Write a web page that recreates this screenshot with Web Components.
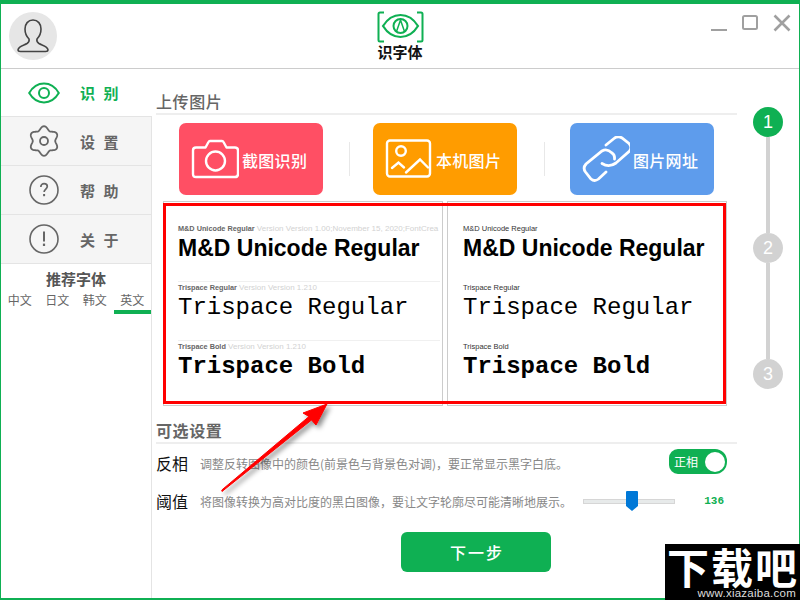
<!DOCTYPE html>
<html lang="zh">
<head>
<meta charset="utf-8">
<title>识字体</title>
<style>
  html, body { margin: 0; padding: 0; background: #fff; }
  body { font-family: "Noto Sans CJK SC", "Liberation Sans", sans-serif; }
</style>
</head>
<body>
<font-app>
  <app-header slot="header"></app-header>

  <side-nav slot="side">
    <nav-item icon="eye" active>识别</nav-item>
    <nav-item icon="gear">设置</nav-item>
    <nav-item icon="help">帮助</nav-item>
    <nav-item icon="info">关于</nav-item>
    <font-tabs></font-tabs>
  </side-nav>

  <main-panel slot="main">
    <section-title tall>上传图片</section-title>
    <upload-row>
      <upload-button icon="camera" color="#ff4f64">截图识别</upload-button>
      <upload-button icon="picture" color="#ff9c00">本机图片</upload-button>
      <upload-button icon="link" color="#5e9cec">图片网址</upload-button>
    </upload-row>
    <font-preview></font-preview>
    <section-title>可选设置</section-title>
    <option-row label="反相" text="调整反转图像中的颜色(前景色与背景色对调)，要正常显示黑字白底。">
      <toggle-switch>正相</toggle-switch>
    </option-row>
    <option-row label="阈值" text="将图像转换为高对比度的黑白图像，要让文字轮廓尽可能清晰地展示。">
      <range-slider value="136"></range-slider>
    </option-row>
    <next-button>下一步</next-button>
  </main-panel>

  <step-rail slot="rail"></step-rail>

  <red-arrow slot="over"></red-arrow>
  <site-mark slot="over"></site-mark>
</font-app>

<script>
const GREEN = '#0fb053';

// scalloped outline for the settings cog
function cogPath(cx, cy, r, bump, lobes) {
  const pts = [];
  for (let i = 0; i < 120; i++) {
    const a = (i / 120) * Math.PI * 2;
    const rr = r + bump * Math.cos(lobes * a);
    pts.push(`${(cx + rr * Math.sin(a)).toFixed(2)} ${(cy - rr * Math.cos(a)).toFixed(2)}`);
  }
  return `M${pts.join('L')}Z`;
}

const ICONS = {
  eye: `<svg width="32" height="22" viewBox="0 0 32 22" fill="none" stroke="${GREEN}" stroke-width="2"><path d="M1.2 11C5 4.6 10 1.6 16 1.6S27 4.6 30.8 11C27 17.4 22 20.4 16 20.4S5 17.4 1.2 11Z"/><circle cx="16" cy="11" r="5"/></svg>`,
  gear: `<svg width="32" height="32" viewBox="0 0 32 32" fill="none" stroke="#666" stroke-width="1.800"><path d="${cogPath(16, 16, 13, 1.8, 6)}"/><circle cx="16" cy="16" r="4"/></svg>`,
  help: `<svg width="32" height="32" viewBox="0 0 32 32" fill="none" stroke="#666"><circle cx="16" cy="16" r="14" stroke-width="1.6"/><path d="M12.8 13c0-2.100 1.400-3.300 3.300-3.300s3.200 1.200 3.200 2.900c0 2.400-3.200 2.700-3.200 5.500" stroke-width="1.700"/><path d="M16.100 20v2.200" stroke-width="2"/></svg>`,
  info: `<svg width="32" height="32" viewBox="0 0 32 32" fill="none" stroke="#666"><circle cx="16" cy="16" r="14" stroke-width="1.6"/><path d="M16 8.600v10" stroke-width="2"/><path d="M16 20.600v2.400" stroke-width="2.200"/></svg>`,
  camera: `<svg width="48" height="40" viewBox="0 0 48 40" fill="none" stroke="#fff" stroke-width="2.400" stroke-linejoin="round"><path d="M5 8.500h9.500l3-5.500q.5-1 1.500-1h12q1 0 1.500 1l3 5.500H44q3 0 3 3V35q0 3-3 3H5q-3 0-3-3V11.500q0-3 3-3Z"/><circle cx="24.500" cy="22" r="9.500"/></svg>`,
  picture: `<svg width="48" height="40" viewBox="0 0 48 40" fill="none" stroke="#fff" stroke-width="2.400" stroke-linecap="round"><rect x="2" y="1.500" width="43" height="36" rx="3"/><circle cx="16" cy="12" r="4.800"/><path d="M7 29l6.500-5.500 5.500 5M21 33.500L35 20.500l8 8"/></svg>`,
  link: `<svg width="48" height="46" viewBox="4 4 48 46" fill="none" stroke="#fff" stroke-width="2.800" stroke-linecap="round"><path d="M28 13L36 6.500Q40 3.500 44 6L51 11.500Q54.500 15 51.500 19L38 31Q31 36 24 31.500"/><path d="M36.500 27Q37 23 34 21Q29 16 24 19L8 32Q4.500 36 7.500 40L13 47Q16.500 50 20.500 47L28 40"/></svg>`,
};

// shared bit: attach an open root and fill it from render()
class ShadowEl extends HTMLElement {
  constructor() {
    super();
    this.attachShadow({ mode: 'open' });
  }
  connectedCallback() {
    this.shadowRoot.innerHTML = this.render();
  }
}

class FontApp extends ShadowEl {
  render() {
    return `<style>
      :host { display: block; position: relative; width: 800px; height: 600px; overflow: hidden; background: #fff; }
      .win { box-sizing: border-box; width: 800px; height: 600px; display: grid; grid-template-rows: 65px 1fr; grid-template-columns: 151px 593px 1fr;
        border-style: solid; border-color: ${GREEN}; border-width: 4px 1px 2px 1px; }
      .head { grid-column: 1 / 4; }
    </style>
    <div class="win">
      <div class="head"><slot name="header"></slot></div>
      <slot name="side"></slot>
      <slot name="main"></slot>
      <slot name="rail"></slot>
    </div>
    <slot name="over"></slot>`;
  }
}

class AppHeader extends ShadowEl {
  render() {
    return `<style>
      :host { display: flex; box-sizing: border-box; height: 65px; border-bottom: 1px solid #ccc; justify-content: space-between; align-items: flex-start; position: relative; }
      .avatar { width: 48px; height: 48px; border-radius: 50%; background: #e6e6e6; margin: 8px 0 0 8px; display: flex; align-items: center; justify-content: center; }
      .logo { position: absolute; left: 0; right: 0; top: 7px; display: flex; flex-direction: column; align-items: center; }
      .logo span { font-size: 15px; line-height: 16px; font-weight: 700; color: #111; margin-top: 1px; }
      .btns { display: flex; align-items: center; gap: 15px; margin: 10px 8px 0 0; }
    </style>
    <div class="avatar">
      <svg width="34" height="36" viewBox="0 0 34 36" fill="none" stroke="#444" stroke-width="1.600">
        <path d="M17 2c-5 0-8 4-8 9 0 4 1.500 7.500 4 10 .6 2-.5 3.500-2 4.500-3 1.800-8.500 2.500-9 6.300 0 1.200 1 1.700 2.500 1.700h25c1.500 0 2.500-.5 2.500-1.700-.5-3.800-6-4.500-9-6.300-1.500-1-2.600-2.500-2-4.500 2.500-2.500 4-6 4-10 0-5-3-9-8-9Z"/>
      </svg>
    </div>
    <div class="logo">
      <svg width="47" height="32" viewBox="0 0 47 32" fill="none" stroke="${GREEN}" stroke-width="2">
        <path d="M7 1.500H3Q1.500 1.500 1.500 3v26q0 1.500 1.500 1.500h4M40 1.500h4q1.500 0 1.500 1.500v26q0 1.500-1.500 1.500h-4"/>
        <path d="M6 15C11 7 17 4 23.500 4S36 7 41 15C36 23 30 26 23.500 26S11 23 6 15Z" stroke-width="2.200"/>
        <circle cx="23.500" cy="15" r="7"/>
        <path d="M19.500 20.500L23.500 9l4 11.500" stroke-width="1.500"/>
      </svg>
      <span>识字体</span>
    </div>
    <div class="btns">
      <svg width="16" height="4" viewBox="0 0 16 4" style="margin-top:14px"><rect y="1" width="16" height="2" fill="#a0a0a0"/></svg>
      <svg width="16" height="16" viewBox="0 0 16 16" fill="none" stroke="#a0a0a0" stroke-width="2"><rect x="1" y="1" width="14" height="13" rx="1.500"/></svg>
      <svg width="18" height="18" viewBox="0 0 18 18" fill="none" stroke="#a0a0a0" stroke-width="2.600"><path d="M1.500 1.500l15 15M16.500 1.500l-15 15"/></svg>
    </div>`;
  }
}

class SideNav extends ShadowEl {
  render() {
    return `<style>
      :host { display: block; box-sizing: border-box; width: 151px; border-right: 1px solid #e4e4e4; background: #fff; }
    </style><slot></slot>`;
  }
}

class NavItem extends ShadowEl {
  render() {
    const active = this.hasAttribute('active');
    const label = this.textContent.trim().split('').join(' ');
    return `<style>
      :host { display: flex; box-sizing: border-box; align-items: center; height: 49px; background: ${active ? '#fff' : '#f5f5f5'};
        border-bottom: 1px solid #e4e4e4; ${active ? 'margin-right: -1px; height: 48px;' : ''} }
      .ico { width: 32px; height: 32px; margin-left: 27px; display: flex; align-items: center; justify-content: center; }
      .txt { margin-left: 20px; font-size: 15px; font-weight: 700; letter-spacing: 2.500px; white-space: pre; color: ${active ? GREEN : '#666'}; }
    </style>
    <div class="ico">${ICONS[this.getAttribute('icon')]}</div>
    <div class="txt">${label}</div>`;
  }
}

class FontTabs extends ShadowEl {
  render() {
    const tabs = ['中文', '日文', '韩文', '英文'];
    return `<style>
      :host { display: block; text-align: center; }
      h4 { margin: 0; padding-top: 5px; font-size: 15px; line-height: 20px; font-weight: 700; color: #555; }
      .tabs { display: grid; grid-template-columns: repeat(4, 1fr); }
      .tab { font-size: 12px; line-height: 20px; height: 25px; box-sizing: border-box; color: #666; padding-top: 1px; }
      .on { border-bottom: 4px solid ${GREEN}; }
    </style>
    <h4>推荐字体</h4>
    <div class="tabs">${tabs.map((t, i) => `<div class="tab${i === 3 ? ' on' : ''}">${t}</div>`).join('')}</div>`;
  }
}

class MainPanel extends ShadowEl {
  render() {
    return `<style>
      :host { display: block; box-sizing: border-box; padding-left: 4px; width: 593px; height: 529px; }
    </style><slot></slot>`;
  }
}

class SectionTitle extends ShadowEl {
  render() {
    const tall = this.hasAttribute('tall');
    return `<style>
      :host { display: flex; box-sizing: border-box; width: 581px; height: ${tall ? 46 : 38}px; align-items: flex-end; border-bottom: 2px solid #eee; }
      span { font-size: 16px; line-height: 22px; margin-bottom: 1px; font-weight: ${tall ? 500 : 700}; color: #666; letter-spacing: .6px; }
    </style><span><slot></slot></span>`;
  }
}

class UploadRow extends ShadowEl {
  render() {
    return `<style>
      :host { display: flex; align-items: center; margin: 8px 0 0 23px; }
      i { width: 1px; height: 34px; background: #e8e8e8; }
      i.a { margin: 0 23px 0 26px; order: 2; }
      i.b { margin: 0 25px 0 27px; order: 4; }
      ::slotted(upload-button:nth-of-type(2)) { order: 3; }
      ::slotted(upload-button:nth-of-type(3)) { order: 5; }
    </style><slot></slot><i class="a"></i><i class="b"></i>`;
  }
}

class UploadButton extends ShadowEl {
  render() {
    return `<style>
      :host { display: flex; width: 144px; height: 72px; box-sizing: border-box; padding-left: 12px; align-items: center; gap: 3px; border-radius: 7px; background: ${this.getAttribute('color')}; color: #fff; }
      span { font-size: 16px; font-weight: 500; letter-spacing: .3px; white-space: nowrap; margin-top: 1px; }
      svg { display: block; flex: none; }
    </style>${ICONS[this.getAttribute('icon')]}<span><slot></slot></span>`;
  }
}

const SAMPLES = [
  { name: 'M&D Unicode Regular', ver: 'Version Version 1.00;November 15, 2020;FontCrea', font: '700 23px "Liberation Sans"', track: '0' },
  { name: 'Trispace Regular', ver: 'Version Version 1.210', font: '400 24px "Liberation Mono"', track: '0' },
  { name: 'Trispace Bold', ver: 'Version Version 1.210', font: '700 24px "Liberation Mono"', track: '0' },
];

class FontPreview extends ShadowEl {
  render() {
    const escName = (s) => s.replace('&', '&amp;');
    const left = SAMPLES.map((s, i) => `<div class="row ${i < 2 ? 'rule' : ''}">
        <div class="small"><b>${escName(s.name)}</b> <span>${s.ver}</span></div>
        <div class="big" style='font:${s.font};letter-spacing:${s.track}'>${escName(s.name)}</div>
      </div>`).join('');
    const right = SAMPLES.map((s) => `<div class="row">
        <div class="small thin">${escName(s.name)}</div>
        <div class="big" style='font:${s.font};letter-spacing:${s.track}'>${escName(s.name)}</div>
      </div>`).join('');
    return `<style>
      :host { display: flex; position: relative; gap: 4px; width: 564px; height: 205px; margin: 6px 0 0 7px; }
      .pane { box-sizing: border-box; border: 1px solid #ccc; height: 205px; padding-top: 21px; overflow: hidden; white-space: nowrap; }
      .l { width: 280px; padding-left: 14px; }
      .r { width: 280px; padding-left: 15px; }
      .row { height: 59px; box-sizing: border-box; font-family: "Liberation Sans", sans-serif; }
      .rule { border-bottom: 1px solid #f0f0f0; margin-right: 2px; }
      .small { font-size: 8px; line-height: 12px; height: 12px; color: #d2d2d2; }
      .small b { font-size: 7.300px; color: #666; }
      .small.thin { font-size: 7.500px; color: #333; }
      .big { line-height: 28px; height: 28px; color: #000; }
      .mark { position: absolute; box-sizing: border-box; left: 0; top: 2px; width: 563px; height: 201px; border: 3px solid #f00; }
    </style>
    <div class="pane l">${left}</div>
    <div class="pane r">${right}</div>
    <div class="mark"></div>`;
  }
}

class OptionRow extends ShadowEl {
  render() {
    return `<style>
      :host { display: flex; width: 581px; height: 38px; align-items: center; box-sizing: border-box; }
      .label { width: 44px; font-size: 16px; color: #111; }
      .text { flex: none; width: 372px; font-size: 12px; color: #888; white-space: nowrap; }
      .ctl { flex: 1; display: flex; justify-content: flex-end; }
    </style>
    <div class="label">${this.getAttribute('label')}</div>
    <div class="text">${this.getAttribute('text')}</div>
    <div class="ctl"><slot></slot></div>`;
  }
}

class ToggleSwitch extends ShadowEl {
  render() {
    return `<style>
      :host { display: flex; box-sizing: border-box; width: 58px; height: 25px; margin: -3px 10px 0 0; border-radius: 9px 12px 12px 9px; background: ${GREEN}; align-items: center; padding-left: 5px; color: #fff; font-size: 12px; }
      i { width: 20px; height: 20px; border-radius: 50%; background: #fff; margin-left: auto; margin-right: 2px; }
    </style><slot></slot><i></i>`;
  }
}

class RangeSlider extends ShadowEl {
  render() {
    return `<style>
      :host { display: flex; align-items: center; margin: 0 13px 0 0; width: 141px; height: 20px; position: relative; }
      .track { box-sizing: border-box; width: 92px; height: 5px; background: #e7eaea; border: 1px solid #d6d6d6; }
      svg { position: absolute; left: 43px; top: 0; }
      .val { margin-left: auto; font: 700 11px "Liberation Mono", monospace; color: ${GREEN}; }
    </style>
    <div class="track"></div>
    <svg width="12" height="20" viewBox="0 0 12 20"><path d="M0 1q0-1 1-1h10q1 0 1 1v14l-6 5-6-5Z" fill="#0078d7"/></svg>
    <div class="val">${this.getAttribute('value')}</div>`;
  }
}

class NextButton extends ShadowEl {
  render() {
    return `<style>
      :host { display: flex; width: 150px; height: 40px; margin: 12px 0 0 245px; padding-left: 2px; box-sizing: border-box; border-radius: 6px; background: ${GREEN}; color: #fff; align-items: center; justify-content: center; font-size: 16px; font-weight: 500; letter-spacing: 2px; }
    </style><slot></slot>`;
  }
}

class StepRail extends ShadowEl {
  render() {
    const node = (n, on) => `<div class="dot${on ? ' on' : ''}">${n}</div>`;
    return `<style>
      :host { display: flex; flex-direction: column; align-items: center; width: 30px; margin: 38px 0 0 8px; }
      .dot { flex: none; width: 30px; height: 30px; border-radius: 50%; background: #d2d2d2; color: #fff; font: 18px/30px "Liberation Sans", sans-serif; text-align: center; }
      .dot.on { background: ${GREEN}; }
      .bar { flex: none; width: 4px; height: 96px; background: #d2d2d2; }
    </style>${node(1, true)}<div class="bar"></div>${node(2)}<div class="bar"></div>${node(3)}`;
  }
}

class RedArrow extends ShadowEl {
  render() {
    return `<style>
      :host { position: absolute; left: 210px; top: 395px; width: 130px; height: 105px; display: block; pointer-events: none; }
    </style>
    <svg width="130" height="105" viewBox="210 395 130 105" style="overflow:visible">
      <defs><filter id="s" x="-20%" y="-20%" width="140%" height="140%"><feDropShadow dx="3" dy="3" stdDeviation="2.500" flood-color="#000" flood-opacity=".45"/></filter></defs>
      <path d="M222 491.500L221.800 490L309 416.500L303 413L327 404L316 425L311.500 420Z" fill="#f00" stroke="#f00" stroke-linejoin="round" filter="url(#s)"/>
    </svg>`;
  }
}

class SiteMark extends ShadowEl {
  render() {
    return `<style>
      :host { position: absolute; right: 0; bottom: 0; width: 135px; height: 56px; background: #000; color: #fff; display: flex; flex-direction: column; }
      .big { font: 700 42px/43px "Noto Sans CJK SC", sans-serif; height: 43px; white-space: nowrap; letter-spacing: 2px; padding-left: 2px; }
      .url { text-align: right; padding-right: 4px; font: 11.500px/13px "Liberation Sans", sans-serif; letter-spacing: .25px; color: #ddd; }
    </style>
    <div class="big">下载吧</div>
    <div class="url">www.xiazaiba.com</div>`;
  }
}

const ELEMENTS = {
  'font-app': FontApp,
  'app-header': AppHeader,
  'side-nav': SideNav,
  'nav-item': NavItem,
  'font-tabs': FontTabs,
  'main-panel': MainPanel,
  'section-title': SectionTitle,
  'upload-row': UploadRow,
  'upload-button': UploadButton,
  'font-preview': FontPreview,
  'option-row': OptionRow,
  'toggle-switch': ToggleSwitch,
  'range-slider': RangeSlider,
  'next-button': NextButton,
  'step-rail': StepRail,
  'red-arrow': RedArrow,
  'site-mark': SiteMark,
};

for (const [tag, cls] of Object.entries(ELEMENTS)) {
  customElements.define(tag, cls);
}
</script>
</body>
</html>
